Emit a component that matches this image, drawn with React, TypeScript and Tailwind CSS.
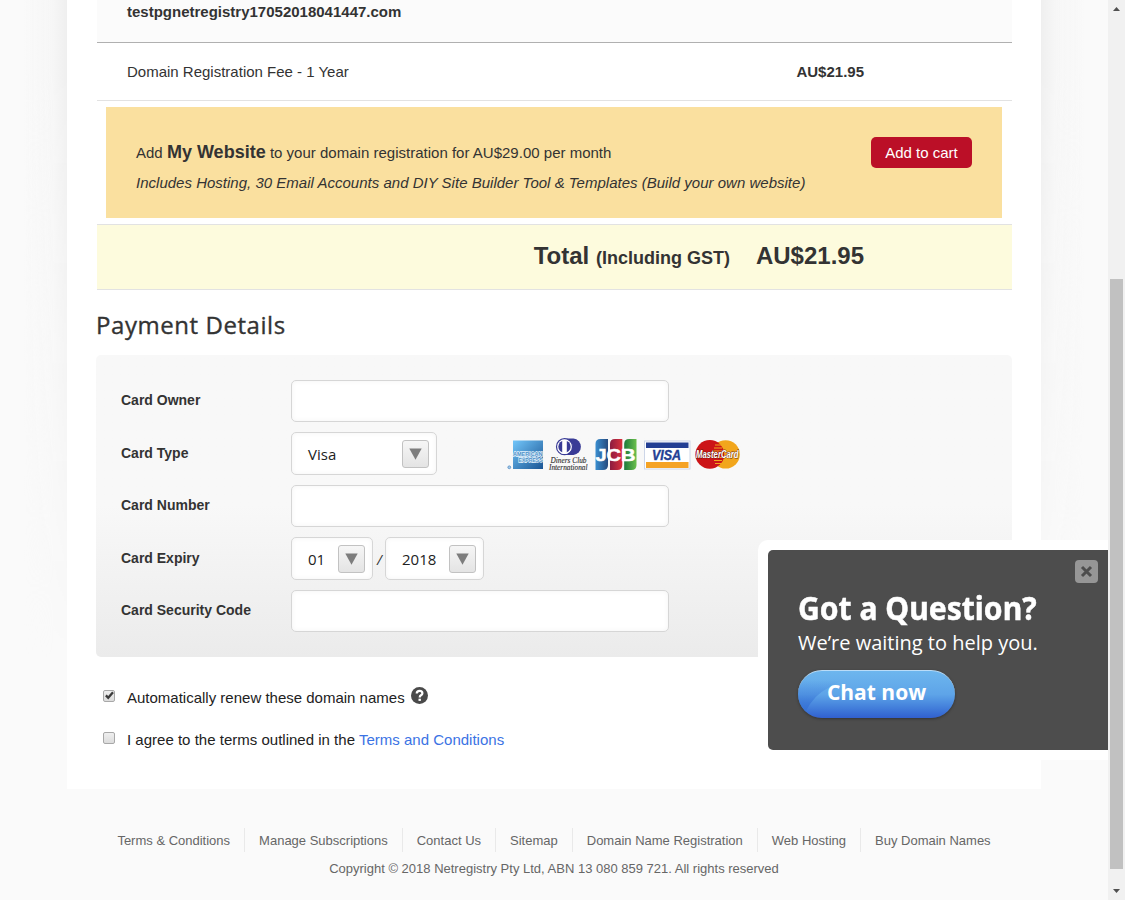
import type { ReactNode } from "react";

function SelectBox({ value, className }: { value: string; className: string }) {
  return (
    <div
      className={`flex h-[43px] items-center justify-between rounded-[5px] border border-[#d6d6d6] bg-white pr-[7px] pl-4 font-['Open_Sans',sans-serif] text-[15px] text-[#222] shadow-[inset_0_0_5px_rgba(0,0,0,0.05)] ${className}`}
    >
      <span className="pt-[2px]">{value}</span>
      <span className="flex h-7 w-[27px] items-center justify-center rounded-[3px] border border-[#c2c2c2] bg-linear-to-b from-[#f6f6f6] to-[#e4e4e4]">
        <svg width="13" height="12" viewBox="0 0 13 12">
          <path d="M0.3 0.4H12.7L6.5 11.7Z" fill="#7d7d7d" />
        </svg>
      </span>
    </div>
  );
}

function TextBox({ label }: { label: string }) {
  return (
    <input
      aria-label={label}
      className="h-[42px] w-[378px] rounded-[5px] border border-[#d6d6d6] bg-white px-4 shadow-[inset_0_0_5px_rgba(0,0,0,0.05)] outline-none"
    />
  );
}

function Field({ label, children, className }: { label: string; children: ReactNode; className: string }) {
  return (
    <div className={`flex ${className}`}>
      <div className="w-[170px] pt-[10px] text-[14px] leading-5 font-bold text-[#333]">{label}</div>
      {children}
    </div>
  );
}

function CardLogos() {
  return (
    <svg width="240" height="36" viewBox="506 437 240 36" className="ml-[69px]" fontFamily="Liberation Sans, sans-serif">
      <defs>
        <linearGradient id="amex" x1="0" y1="0" x2="1" y2="1">
          <stop offset="0" stopColor="#72c6fa" />
          <stop offset="1" stopColor="#1b5594" />
        </linearGradient>
        <linearGradient id="jcbBlue"><stop stopColor="#3a8ed0" /><stop offset="1" stopColor="#254a7e" /></linearGradient>
        <linearGradient id="jcbRed"><stop stopColor="#8c1c40" /><stop offset="1" stopColor="#d8303c" /></linearGradient>
        <linearGradient id="jcbGreen"><stop stopColor="#1c7a3c" /><stop offset="1" stopColor="#6cc04c" /></linearGradient>
      </defs>
      <circle cx="509.3" cy="467.3" r="1.4" fill="#a8cbe8" stroke="#5b93c8" strokeWidth="0.9" />
      <rect x="513" y="440.5" width="30" height="28.5" fill="url(#amex)" />
      <g fontSize="6" fontWeight="bold" fill="#4b8fc8" stroke="#e4f2fc" strokeWidth="1.3" paintOrder="stroke">
        <text x="513" y="455.8" textLength="29.5" lengthAdjust="spacingAndGlyphs">AMERICAN</text>
        <text x="518.5" y="461.8" textLength="24.2" lengthAdjust="spacingAndGlyphs">EXPRESS</text>
      </g>
      <path d="M564 438.5H573.5A8.3 8.3 0 0 1 573.5 455H564Z" fill="#393b96" />
      <circle cx="564.5" cy="446.7" r="8" fill="#fff" stroke="#393b96" strokeWidth="1.2" />
      <circle cx="564.5" cy="446.7" r="6.2" fill="#393b96" />
      <rect x="562.2" y="439.8" width="4.6" height="14" fill="#fff" />
      <g fontFamily="Liberation Serif, serif" fontStyle="italic" fill="#333" stroke="#333" strokeWidth="0.12">
        <text x="550.5" y="463" fontSize="7.4" textLength="36" lengthAdjust="spacingAndGlyphs">Diners Club</text>
        <text x="549" y="469.8" fontSize="7.4" textLength="38.5" lengthAdjust="spacingAndGlyphs">International</text>
      </g>
      <path d="M595.5 470V444Q595.5 439 600.5 439H608V465Q608 470 603 470Z" fill="url(#jcbBlue)" />
      <path d="M610 470V444Q610 439 615 439H622.3V465Q622.3 470 617.3 470Z" fill="url(#jcbRed)" />
      <path d="M624.2 470V444Q624.2 439 629.2 439H636.5V465Q636.5 470 631.5 470Z" fill="url(#jcbGreen)" />
      <text x="595.5" y="460.5" fontSize="16.5" fontWeight="bold" fill="#fff" stroke="#fff" strokeWidth="0.5" textLength="40" lengthAdjust="spacingAndGlyphs">JCB</text>
      <rect x="644.5" y="441" width="45.5" height="28" fill="#fff" stroke="#cdd6e8" />
      <rect x="646" y="442.5" width="42.5" height="5.5" fill="#233f94" />
      <rect x="646" y="462" width="42.5" height="6" fill="#f5a325" />
      <text x="652" y="460.2" fontSize="14.2" fontWeight="bold" fontStyle="italic" fill="#233f94" stroke="#233f94" strokeWidth="0.4" textLength="29" lengthAdjust="spacingAndGlyphs">VISA</text>
      <circle cx="725.6" cy="454.4" r="14.2" fill="#f2a61c" />
      <circle cx="709.8" cy="454.4" r="14.4" fill="#cc1417" />
      <path d="M715 445h7M714 448h8M713 451h9M713 457.5h9M714 460.5h8M715 463.5h7" stroke="#f2a61c" strokeWidth="1" />
      <text x="696" y="458.4" fontSize="10.5" fontWeight="bold" fontStyle="italic" fill="#fff" stroke="#5a2010" strokeWidth="0.8" paintOrder="stroke" textLength="42.5" lengthAdjust="spacingAndGlyphs">MasterCard</text>
    </svg>
  );
}

function Checkbox({ checked }: { checked?: boolean }) {
  return (
    <span className="mb-[3px] flex size-3 items-center justify-center rounded-[2px] border border-[#a8a8a8] bg-linear-to-b from-[#efefef] to-[#dcdcdc]">
      {checked && (
        <svg className="shrink-0" width="11" height="11" viewBox="0 0 11 11">
          <path d="M1.9 5.4L4.2 7.8L9 2.2" fill="none" stroke="#3c3c3c" strokeWidth="2.3" />
        </svg>
      )}
    </span>
  );
}

function ChatWidget() {
  return (
    <div className="absolute top-[540px] left-[758px] h-[220px] w-[350px] rounded-l-[10px] bg-white py-[10px] pl-[10px]">
      <div className="relative h-[200px] rounded-l-[5px] bg-[#4d4d4d] pt-[38px] pl-[30px] font-['Open_Sans',sans-serif] text-white">
        <button aria-label="Close" className="absolute top-[10px] right-[10px] flex size-[23px] items-center justify-center rounded-[4px] bg-[#969696]">
          <svg width="13" height="13" viewBox="0 0 13 13">
            <path d="M2 2L11 11M11 2L2 11" stroke="#4d4d4d" strokeWidth="3" />
          </svg>
        </button>
        <h3 className="h-[41px] origin-left scale-x-[0.912] font-['Noto_Sans',sans-serif] text-[33px] leading-[40px] font-bold whitespace-nowrap [-webkit-text-stroke:0.5px_white]">Got a Question?</h3>
        <p className="h-7 text-[20px] leading-7 whitespace-nowrap">We’re waiting to help you.</p>
        <button className="relative mt-[13px] flex h-12 w-[157px] items-center justify-center overflow-hidden rounded-full border-t border-[#b9dcf8] bg-linear-to-b from-[#6db6ee] via-[#5ea4e8] to-[#3160cf] pb-1 text-[21px] font-bold shadow-[0_1px_3px_rgba(0,0,0,0.35)]">
          <svg className="absolute inset-0" width="157" height="47" viewBox="0 0 157 47">
            <defs>
              <linearGradient id="gloss" x1="0" y1="0" x2="0" y2="1">
                <stop offset="0.2" stopColor="#3470d4" stopOpacity="0" />
                <stop offset="0.75" stopColor="#3470d4" stopOpacity="0.7" />
              </linearGradient>
            </defs>
            <path d="M0 0H60L30 17Q16 24 8 40L0 47Z" fill="url(#gloss)" />
          </svg>
          <span className="relative">Chat now</span>
        </button>
      </div>
    </div>
  );
}

const footerLinks = [
  "Terms & Conditions",
  "Manage Subscriptions",
  "Contact Us",
  "Sitemap",
  "Domain Name Registration",
  "Web Hosting",
  "Buy Domain Names",
];

export default function App() {
  return (
    <div className="relative flex h-[900px] w-[1125px] overflow-hidden bg-[#fafafa] font-['Liberation_Sans',sans-serif] text-[15px] text-[#333]">
      <div className="w-[1108px]">
        <div className="flex h-[789px]">
          <div className="h-[660px] w-[67px] bg-linear-to-r from-transparent from-35% via-[#f6f6f6] via-80% to-[#efefef] mask-b-from-10% mask-b-to-100%" />
          <main className="h-[789px] w-[974px] bg-white px-[30px]">
            <section className="w-[915px]">
              <div className="h-[43px] border-b border-[#b0b0b0] bg-[#fbfbfb] pt-[2px] pl-[30px] leading-5 font-bold">
                testpgnetregistry17052018041447.com
              </div>
              <div className="flex h-[58px] justify-between border-b border-[#e2e2e2] pt-[19px] pr-[148px] pl-[30px] leading-5">
                <span>Domain Registration Fee - 1 Year</span>
                <span className="font-bold">AU$21.95</span>
              </div>
              <div className="mx-[9px] my-[6px] flex h-[111px] w-[896px] justify-between bg-[#fae09f] px-[30px] pt-[30px] leading-[30px]">
                <div>
                  <p className="tracking-[0.01px]">
                    Add <b className="text-[18px]">My Website</b> to your domain registration for AU$29.00 per month
                  </p>
                  <p className="tracking-[0.01px] italic">Includes Hosting, 30 Email Accounts and DIY Site Builder Tool &amp; Templates (Build your own website)</p>
                </div>
                <button className="flex h-[31px] w-[101px] items-center justify-center rounded-[5px] bg-[#bb0f27] text-white">Add to cart</button>
              </div>
              <div className="flex h-[66px] items-baseline justify-end border-y border-[#e2e2e2] bg-[#fdfbdd] pt-[13px] pr-[148px] text-[24px] leading-9 font-bold">
                <span>
                  Total <span className="text-[18px]">(Including GST)</span>
                </span>
                <span className="ml-[26px]">AU$21.95</span>
              </div>
            </section>

            <h2 className="-ml-px h-[65px] pt-[17px] font-['Open_Sans',sans-serif] text-[24px] leading-9 tracking-[0.56px] [-webkit-text-stroke:0.35px_#333]">Payment Details</h2>

            <section className="-ml-px h-[302px] w-[916px] rounded-[5px] bg-linear-to-b from-[#f8f8f8] from-50% to-[#ebebeb] pt-[25px] pl-[25px]">
              <Field label="Card Owner" className="h-[52px]"><TextBox label="Card Owner" /></Field>
              <Field label="Card Type" className="h-[53px] *:first:pt-[11px]">
                <SelectBox value="Visa" className="w-[146px]" />
                <div className="pt-[5px]"><CardLogos /></div>
              </Field>
              <Field label="Card Number" className="h-[52px]"><TextBox label="Card Number" /></Field>
              <Field label="Card Expiry" className="h-[53px] *:first:pt-[11px]">
                <SelectBox value="01" className="w-[82px]" />
                <span className="-mx-px w-[14px] pt-3 pl-px text-center font-['Open_Sans',sans-serif] text-[14px] italic">/</span>
                <SelectBox value="2018" className="w-[99px]" />
              </Field>
              <Field label="Card Security Code" className="h-[52px]"><TextBox label="Card Security Code" /></Field>
            </section>

            <section className="pl-[6px] text-[#222]">
              <div className="flex h-[80px] items-center">
                <Checkbox checked />
                <span className="ml-3 pt-[3px]">Automatically renew these domain names</span>
                <svg className="mb-1 ml-[6px]" width="17" height="17" viewBox="0 0 17 17">
                  <circle cx="8.5" cy="8.5" r="8.5" fill="#4a4a4a" />
                  <path d="M5.7 6.5Q5.8 3.8 8.6 3.8Q11.4 3.8 11.4 6.2Q11.4 7.4 10 8.2Q8.7 9 8.7 10.4" fill="none" stroke="#fff" strokeWidth="2.2" />
                  <rect x="7.5" y="11.7" width="2.4" height="2.2" fill="#fff" />
                </svg>
              </div>
              <div className="flex h-[4px] items-center">
                <Checkbox />
                <span className="ml-3 pt-[3px] tracking-[0.01px]">
                  I agree to the terms outlined in the <a className="text-[#3b73e4]">Terms and Conditions</a>
                </span>
              </div>
            </section>
          </main>
          <div className="h-[660px] w-[67px] bg-linear-to-l from-transparent from-35% via-[#f6f6f6] via-80% to-[#efefef] mask-b-from-10% mask-b-to-100%" />
        </div>

        <footer className="pt-[39px] text-[13px] text-[#666]">
          <nav className="flex h-6 justify-center leading-[26px]">
            {footerLinks.map((t, i) => (
              <a key={t} className={i ? "border-l border-[#e9e9e9] px-[14px]" : "px-[14px]"}>{t}</a>
            ))}
          </nav>
          <p className="pt-[7px] text-center leading-5">Copyright © 2018 Netregistry Pty Ltd, ABN 13 080 859 721. All rights reserved</p>
        </footer>
      </div>

      <div className="flex h-[900px] w-[17px] flex-col items-center bg-[#f1f1f1]">
        <svg className="h-[279px]" width="17" height="279" viewBox="0 0 17 279"><path d="M5 11L8.5 7L12 11Z" fill="#505050" /></svg>
        <div className="h-[590px] w-[13px] bg-[#c1c1c1]" />
        <svg width="17" height="31" viewBox="0 0 17 31"><path d="M5 20L8.5 24L12 20Z" fill="#505050" /></svg>
      </div>

      <ChatWidget />
    </div>
  );
}
